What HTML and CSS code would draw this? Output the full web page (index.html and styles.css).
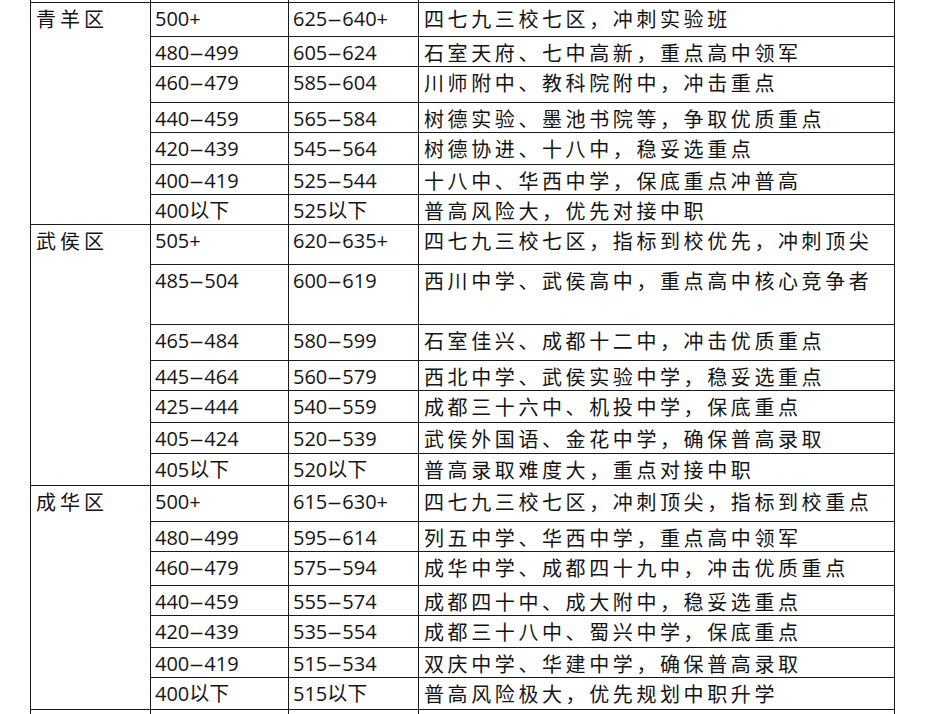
FILE: index.html
```html
<!DOCTYPE html>
<html lang="zh-CN">
<head>
<meta charset="utf-8">
<title>分数段对照表</title>
<link rel="stylesheet" href="styles.css">
</head>
<body>
<table class="grid">
<colgroup>
<col class="c1"><col class="c2"><col class="c3"><col class="c4">
</colgroup>
<tbody>
<tr class="stub"><td></td><td></td><td></td><td></td></tr>

<tr class="h34"><td class="area" rowspan="7">青羊区</td><td class="num">500+</td><td class="num">625<span class="dash">-</span>640+</td><td class="txt">四七九三校七区，冲刺实验班</td></tr>
<tr class="h30"><td class="num">480<span class="dash">-</span>499</td><td class="num">605<span class="dash">-</span>624</td><td class="txt">石室天府、七中高新，重点高中领军</td></tr>
<tr class="h36"><td class="num">460<span class="dash">-</span>479</td><td class="num">585<span class="dash">-</span>604</td><td class="txt">川师附中、教科院附中，冲击重点</td></tr>
<tr class="h30"><td class="num">440<span class="dash">-</span>459</td><td class="num">565<span class="dash">-</span>584</td><td class="txt">树德实验、墨池书院等，争取优质重点</td></tr>
<tr class="h32"><td class="num">420<span class="dash">-</span>439</td><td class="num">545<span class="dash">-</span>564</td><td class="txt">树德协进、十八中，稳妥选重点</td></tr>
<tr class="h30"><td class="num">400<span class="dash">-</span>419</td><td class="num">525<span class="dash">-</span>544</td><td class="txt">十八中、华西中学，保底重点冲普高</td></tr>
<tr class="h30"><td class="num">400以下</td><td class="num">525以下</td><td class="txt">普高风险大，优先对接中职</td></tr>

<tr class="h40"><td class="area" rowspan="7">武侯区</td><td class="num">505+</td><td class="num">620<span class="dash">-</span>635+</td><td class="txt">四七九三校七区，指标到校优先，冲刺顶尖</td></tr>
<tr class="h60"><td class="num">485<span class="dash">-</span>504</td><td class="num">600<span class="dash">-</span>619</td><td class="txt">西川中学、武侯高中，重点高中核心竞争者</td></tr>
<tr class="h36"><td class="num">465<span class="dash">-</span>484</td><td class="num">580<span class="dash">-</span>599</td><td class="txt">石室佳兴、成都十二中，冲击优质重点</td></tr>
<tr class="h30"><td class="num">445<span class="dash">-</span>464</td><td class="num">560<span class="dash">-</span>579</td><td class="txt">西北中学、武侯实验中学，稳妥选重点</td></tr>
<tr class="h32"><td class="num">425<span class="dash">-</span>444</td><td class="num">540<span class="dash">-</span>559</td><td class="txt">成都三十六中、机投中学，保底重点</td></tr>
<tr class="h31"><td class="num">405<span class="dash">-</span>424</td><td class="num">520<span class="dash">-</span>539</td><td class="txt">武侯外国语、金花中学，确保普高录取</td></tr>
<tr class="h32"><td class="num">405以下</td><td class="num">520以下</td><td class="txt">普高录取难度大，重点对接中职</td></tr>

<tr class="h36"><td class="area" rowspan="7">成华区</td><td class="num">500+</td><td class="num">615<span class="dash">-</span>630+</td><td class="txt">四七九三校七区，冲刺顶尖，指标到校重点</td></tr>
<tr class="h30"><td class="num">480<span class="dash">-</span>499</td><td class="num">595<span class="dash">-</span>614</td><td class="txt">列五中学、华西中学，重点高中领军</td></tr>
<tr class="h34"><td class="num">460<span class="dash">-</span>479</td><td class="num">575<span class="dash">-</span>594</td><td class="txt">成华中学、成都四十九中，冲击优质重点</td></tr>
<tr class="h30"><td class="num">440<span class="dash">-</span>459</td><td class="num">555<span class="dash">-</span>574</td><td class="txt">成都四十中、成大附中，稳妥选重点</td></tr>
<tr class="h32"><td class="num">420<span class="dash">-</span>439</td><td class="num">535<span class="dash">-</span>554</td><td class="txt">成都三十八中、蜀兴中学，保底重点</td></tr>
<tr class="h30"><td class="num">400<span class="dash">-</span>419</td><td class="num">515<span class="dash">-</span>534</td><td class="txt">双庆中学、华建中学，确保普高录取</td></tr>
<tr class="h32"><td class="num">400以下</td><td class="num">515以下</td><td class="txt">普高风险极大，优先规划中职升学</td></tr>

<tr class="h30"><td></td><td></td><td></td><td></td></tr>
</tbody>
</table>
</body>
</html>
```

FILE: styles.css
```css
html, body {
  margin: 0;
  padding: 0;
  background: #ffffff;
  overflow: hidden;
}

body {
  height: 714px;
  color: #141414;
  font-family: "Open Sans", "Noto Sans CJK SC", sans-serif;
}

.grid {
  border-collapse: collapse;
  table-layout: fixed;
  width: 864px;
  margin-left: 30px;
}

.c1 { width: 120px; }
.c2 { width: 138px; }
.c3 { width: 130px; }
.c4 { width: 476px; }

.grid td {
  border: 1px solid #1a1a1a;
  vertical-align: top;
  padding: 4px 4px 0 4px;
  font-size: 20px;
  line-height: 24px;
  white-space: nowrap;
  overflow: hidden;
}

.grid .stub td {
  height: 2px;
  padding: 0;
  border-top: none;
}

.h30 { height: 30px; }
.h31 { height: 31px; }
.h32 { height: 32px; }
.h34 { height: 34px; }
.h36 { height: 36px; }
.h40 { height: 40px; }
.h60 { height: 60px; }

.grid td.area {
  font-family: "Noto Sans CJK SC", sans-serif;
  letter-spacing: 4px;
  padding-left: 5px;
}

.grid td.num {
  font-family: "Open Sans", "Noto Sans CJK SC", sans-serif;
}

.dash {
  display: inline-block;
  width: 15px;
  text-align: center;
  transform: scaleX(2.4);
}

.grid td.txt {
  font-family: "Noto Sans CJK SC", sans-serif;
  letter-spacing: 3.6px;
  padding-left: 5px;
}
```
